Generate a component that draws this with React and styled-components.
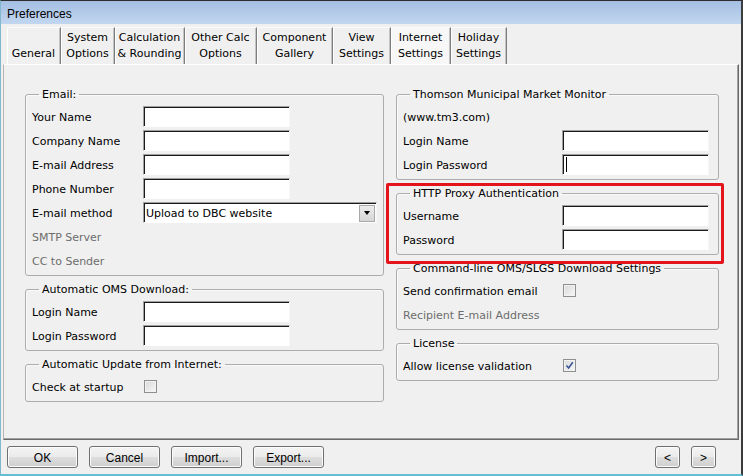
import React from 'react';
import styled, { createGlobalStyle } from 'styled-components';

const GlobalStyle = createGlobalStyle`
  html, body {
    margin: 0;
    padding: 0;
    background: #f0f0f0;
  }
  * {
    box-sizing: border-box;
  }
`;

const Window = styled.div`
  width: 743px;
  height: 476px;
  display: flex;
  flex-direction: column;
  background: #f0f0f0;
  border-top: 1px solid #2e2e2e;
  border-left: 1px solid #7fb9cc;
  border-right: 2px solid #3c3c3c;
  border-bottom: 2px solid #62bfd6;
  font-family: "DejaVu Sans", "Liberation Sans", sans-serif;
  font-size: 11px;
  color: #000;
  overflow: hidden;
`;

const TitleBar = styled.div`
  height: 23px;
  flex: none;
  display: flex;
  align-items: center;
  padding: 2px 0 0 6px;
  background: linear-gradient(180deg, #a4bfe2 0%, #b6cdea 60%, #c2d6ef 100%);
  font-family: "Liberation Sans", "DejaVu Sans", sans-serif;
  font-size: 12px;
`;

const TabStrip = styled.div`
  height: 40px;
  flex: none;
  display: flex;
  align-items: flex-end;
  padding: 3px 0 0 6px;
`;

const Tab = styled.div`
  width: ${({ $w }) => $w}px;
  height: 37px;
  flex: none;
  display: flex;
  flex-direction: column;
  justify-content: flex-end;
  align-items: center;
  padding-bottom: 2px;
  line-height: 16px;
  white-space: nowrap;
  background: ${({ $active }) => ($active ? '#f7f7f7' : '#f0f0f0')};
  border-top: 1px solid #fafafa;
  border-right: 1px solid #7c7c7c;
  box-shadow: inset 1px 0 0 #ffffff, inset -1px 0 0 #c4c4c4;
`;

const Panel = styled.div`
  height: 376px;
  flex: none;
  margin: 0 2px;
  display: grid;
  grid-template-columns: 359px 323px;
  column-gap: 12px;
  align-items: start;
  padding: 21px 0 0 21px;
  border-top: 1px solid #ffffff;
  border-left: 1px solid #b4b4b4;
  border-right: 1px solid #696969;
  border-bottom: 1px solid #696969;
  box-shadow: inset -1px -1px 0 #a0a0a0;
`;

const Column = styled.div`
  display: flex;
  flex-direction: column;
  gap: 5px;
`;

const Group = styled.fieldset`
  margin: 0;
  min-width: 0;
  padding: 3px 6px 4px 6px;
  border: 1px solid #acacac;
  border-radius: 3px;
  box-shadow: inset 1px 1px 0 #fafafa;
`;

const Legend = styled.legend`
  margin-left: 7px;
  padding: 1px 3px 0;
  line-height: 16px;
`;

const Rows = styled.div`
  display: flex;
  flex-direction: column;
  gap: 3px;
`;

const Row = styled.div`
  height: 21px;
  display: flex;
  align-items: center;
`;

const Label = styled.span`
  width: ${({ $w }) => $w}px;
  flex: none;
  padding-top: 2px;
  white-space: nowrap;
  color: ${({ $disabled }) => ($disabled ? '#6d6d6d' : '#000')};
`;

const TextBox = styled.div`
  position: relative;
  width: ${({ $w }) => $w || 147}px;
  height: 21px;
  flex: none;
  display: flex;
  align-items: center;
  padding: 1px 0 0 2px;
  background: #fff;
  border: 1px solid;
  border-color: #a0a0a0 #f6f6f6 #ffffff #a0a0a0;
  box-shadow: inset 1px 1px 0 #1a1a1a;
  white-space: nowrap;

  ${({ $caret }) =>
    $caret &&
    `
    &::after {
      content: '';
      position: absolute;
      left: 3px;
      top: 2px;
      bottom: 2px;
      width: 1px;
      background: #000;
    }
  `}
`;

const DropButton = styled.div`
  width: 16px;
  height: 17px;
  margin-left: auto;
  margin-right: 1px;
  display: flex;
  align-items: center;
  justify-content: center;
  background: linear-gradient(180deg, #ececec 0%, #d6d6d6 100%);
  border: 1px solid #a9a9a9;
`;

const Arrow = styled.span`
  width: 0;
  height: 0;
  border-left: 3.5px solid transparent;
  border-right: 3.5px solid transparent;
  border-top: 4px solid #000;
`;

const CheckBox = styled.div`
  width: 13px;
  height: 13px;
  flex: none;
  margin-left: 1px;
  display: flex;
  align-items: center;
  justify-content: center;
  border: 1px solid #8e8f8f;
  background: linear-gradient(135deg, #d9d9d9 0%, #f7f7f7 100%);
  box-shadow: inset 0 0 0 1px #f2f2f2;
`;

const HighlightWrap = styled.div`
  position: relative;
`;

const Highlight = styled.div`
  position: absolute;
  top: -2px;
  left: -10px;
  right: -5px;
  bottom: -9px;
  border: 3px solid #e3141c;
  border-radius: 2px;
  pointer-events: none;
  z-index: 2;
`;

const ButtonBar = styled.div`
  flex: 1;
  display: flex;
  align-items: flex-start;
  gap: 11px;
  padding: 6px 25px 0 6px;
`;

const Spacer = styled.div`
  flex: 1;
`;

const Button = styled.button`
  width: ${({ $w }) => $w}px;
  height: 22px;
  padding: 1px 0 0;
  border: 1px solid #707070;
  border-radius: 3px;
  background: linear-gradient(180deg, #f4f4f4 0%, #ebebeb 48%, #dddddd 52%, #cfcfcf 100%);
  box-shadow: inset 0 0 0 1px #fbfbfb;
  font-family: "Liberation Sans Narrow", "Liberation Sans", sans-serif;
  font-size: 12px;
  color: #000;
`;

const tabs = [
  { w: 54, lines: ['General'] },
  { w: 54, lines: ['System', 'Options'] },
  { w: 70, lines: ['Calculation', '& Rounding'] },
  { w: 72, lines: ['Other Calc', 'Options'] },
  { w: 76, lines: ['Component', 'Gallery'] },
  { w: 58, lines: ['View', 'Settings'] },
  { w: 60, lines: ['Internet', 'Settings'], active: true },
  { w: 56, lines: ['Holiday', 'Settings'] },
];

const Check = () => (
  <svg width="9" height="9" viewBox="0 0 9 9">
    <path d="M1.5 4.5 L3.6 7 L7.8 1.2" fill="none" stroke="#3b5694" strokeWidth="1.6" />
  </svg>
);

const Field = ({ label, w, caret }) => (
  <Row>
    <Label $w={w}>{label}</Label>
    <TextBox $caret={caret} />
  </Row>
);

const CheckRow = ({ label, w, checked }) => (
  <Row>
    <Label $w={w}>{label}</Label>
    <CheckBox>{checked && <Check />}</CheckBox>
  </Row>
);

const TextRow = ({ children, disabled }) => (
  <Row>
    <Label $disabled={disabled}>{children}</Label>
  </Row>
);

const LEFT = 111;
const RIGHT = 159;

export default function App() {
  return (
    <>
      <GlobalStyle />
      <Window>
        <TitleBar>Preferences</TitleBar>

        <TabStrip>
          {tabs.map((t) => (
            <Tab key={t.lines.join(' ')} $w={t.w} $active={t.active}>
              {t.lines.map((l) => (
                <span key={l}>{l}</span>
              ))}
            </Tab>
          ))}
        </TabStrip>

        <Panel>
          <Column>
            <Group>
              <Legend>Email:</Legend>
              <Rows>
                <Field label="Your Name" w={LEFT} />
                <Field label="Company Name" w={LEFT} />
                <Field label="E-mail Address" w={LEFT} />
                <Field label="Phone Number" w={LEFT} />
                <Row>
                  <Label $w={LEFT}>E-mail method</Label>
                  <TextBox $w={234}>
                    Upload to DBC website
                    <DropButton>
                      <Arrow />
                    </DropButton>
                  </TextBox>
                </Row>
                <TextRow disabled>SMTP Server</TextRow>
                <TextRow disabled>CC to Sender</TextRow>
              </Rows>
            </Group>

            <Group>
              <Legend>Automatic OMS Download:</Legend>
              <Rows>
                <Field label="Login Name" w={LEFT} />
                <Field label="Login Password" w={LEFT} />
              </Rows>
            </Group>

            <Group>
              <Legend>Automatic Update from Internet:</Legend>
              <Rows>
                <CheckRow label="Check at startup" w={LEFT} />
              </Rows>
            </Group>
          </Column>

          <Column>
            <Group>
              <Legend>Thomson Municipal Market Monitor</Legend>
              <Rows>
                <TextRow>(www.tm3.com)</TextRow>
                <Field label="Login Name" w={RIGHT} />
                <Field label="Login Password" w={RIGHT} caret />
              </Rows>
            </Group>

            <HighlightWrap>
              <Group>
                <Legend>HTTP Proxy Authentication</Legend>
                <Rows>
                  <Field label="Username" w={RIGHT} />
                  <Field label="Password" w={RIGHT} />
                </Rows>
              </Group>
              <Highlight />
            </HighlightWrap>

            <Group>
              <Legend>Command-line OMS/SLGS Download Settings</Legend>
              <Rows>
                <CheckRow label="Send confirmation email" w={RIGHT} />
                <TextRow disabled>Recipient E-mail Address</TextRow>
              </Rows>
            </Group>

            <Group>
              <Legend>License</Legend>
              <Rows>
                <CheckRow label="Allow license validation" w={RIGHT} checked />
              </Rows>
            </Group>
          </Column>
        </Panel>

        <ButtonBar>
          <Button $w={71}>OK</Button>
          <Button $w={71}>Cancel</Button>
          <Button $w={71}>Import...</Button>
          <Button $w={71}>Export...</Button>
          <Spacer />
          <Button $w={25}>&lt;</Button>
          <Button $w={25}>&gt;</Button>
        </ButtonBar>
      </Window>
    </>
  );
}
